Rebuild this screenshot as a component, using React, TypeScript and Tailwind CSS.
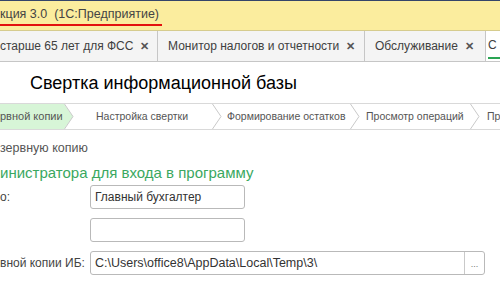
import React from 'react';

const tabs = [
  { label: 'старше 65 лет для ФСС', width: 'w-[158px]', pl: 'pl-0' },
  { label: 'Монитор налогов и отчетности', width: 'w-[207px]', pl: 'pl-[10px]' },
  { label: 'Обслуживание', width: 'w-[121px]', pl: 'pl-[10px]' },
];

const steps = [
  { label: 'Настройка свертки', width: 'w-[148px]', pl: 'pl-[22px]' },
  { label: 'Формирование остатков', width: 'w-[138px]', pl: 'pl-[5px]' },
  { label: 'Просмотр операций', width: 'w-[120px]', pl: 'pl-[6px]' },
];

const Chevron = ({ fill }: { fill?: string }) => (
  <svg width="10" height="25" viewBox="0 0 10 25" className="shrink-0">
    {fill && <polygon points="0,0 9,12.5 0,25" fill={fill} />}
    <polyline points="0.5,0 9,12.5 0.5,25" fill="none" stroke="#c9c9c9" strokeWidth="1" />
  </svg>
);

export default function App() {
  return (
    <div className="w-[500px] h-[300px] overflow-hidden bg-white font-['Liberation_Sans',Arial,sans-serif] text-[#333]">
      {/* title bar */}
      <div className="h-[31px] border-t border-[#34456a] border-b border-b-[#d6cc8e] bg-[#fbed9e]">
        <div className="inline-flex flex-col">
          <div className="h-[22px] flex items-end text-[12.5px] text-[#444] whitespace-pre leading-none pb-[3px]">
            кция 3.0  (1С:Предприятие)
          </div>
          <div className="h-[2px] w-[162px] bg-[#e3110e]" />
        </div>
      </div>

      {/* tabs */}
      <div className="h-[31px] flex bg-[#f4f4f4] border-b border-[#c6c6c6]">
        {tabs.map((t) => (
          <div
            key={t.label}
            className={`${t.width} ${t.pl} shrink-0 flex items-center border-r border-[#c6c6c6] text-[12px] text-[#404040] whitespace-nowrap`}
          >
            <span>{t.label}</span>
            <span className="ml-[7px] text-[11px] font-bold text-[#555]">✕</span>
          </div>
        ))}
        <div className="flex-1 bg-white flex flex-col justify-center pl-[2px]">
          <span className="text-[12px] text-[#404040] mt-[3px]">С</span>
          <div className="h-[2px] w-full bg-[#2aa554] mt-[3px]" />
        </div>
      </div>

      {/* page title */}
      <div className="h-[41px] pl-[30px] flex items-center text-[18px] text-black pt-[2px]">
        Свертка информационной базы
      </div>

      {/* steps */}
      <div className="h-[27px] flex border-y border-[#d9d9d9] text-[10.5px] text-[#555] whitespace-nowrap">
        <div className="w-[74px] shrink-0 flex">
          <div className="flex-1 bg-[#d7f5d7] flex items-center text-[11px]">рвной копии</div>
          <Chevron fill="#d7f5d7" />
        </div>
        {steps.map((s) => (
          <div key={s.label} className={`${s.width} shrink-0 flex`}>
            <div className={`flex-1 flex items-center ${s.pl}`}>{s.label}</div>
            <Chevron />
          </div>
        ))}
        <div className="flex-1 flex items-center pl-[7px]">Пр</div>
      </div>

      {/* form */}
      <div className="pt-[10px] text-[12.5px] leading-[16px] text-[#555]">зервную копию</div>
      <div className="mt-[8px] text-[15px] text-[#3aa85f] leading-[18px]">инистратора для входа в программу</div>

      <div className="mt-[3px] flex flex-col gap-[9px]">
        <div className="flex items-center h-[24px]">
          <div className="w-[90px] text-[12px] text-[#444]">о:</div>
          <div className="w-[155px] h-full border border-[#b9b9b9] rounded-[3px] flex items-center pl-[4px] text-[12px] text-[#333]">
            Главный бухгалтер
          </div>
        </div>
        <div className="flex items-center h-[24px]">
          <div className="w-[90px]" />
          <div className="w-[155px] h-full border border-[#b9b9b9] rounded-[3px]" />
        </div>
        <div className="flex items-center h-[24px]">
          <div className="w-[90px] text-[12px] text-[#444] whitespace-nowrap">вной копии ИБ:</div>
          <div className="w-[395px] h-full border border-[#b9b9b9] rounded-[3px] flex">
            <div className="flex-1 flex items-center pl-[4px] text-[12.5px] text-[#333]">
              C:\Users\office8\AppData\Local\Temp\3\
            </div>
            <div className="w-[20px] border-l border-[#c9c9c9] flex items-end justify-center pb-[5px] text-[9px] text-[#777] leading-none">
              ...
            </div>
          </div>
        </div>
      </div>
    </div>
  );
}
